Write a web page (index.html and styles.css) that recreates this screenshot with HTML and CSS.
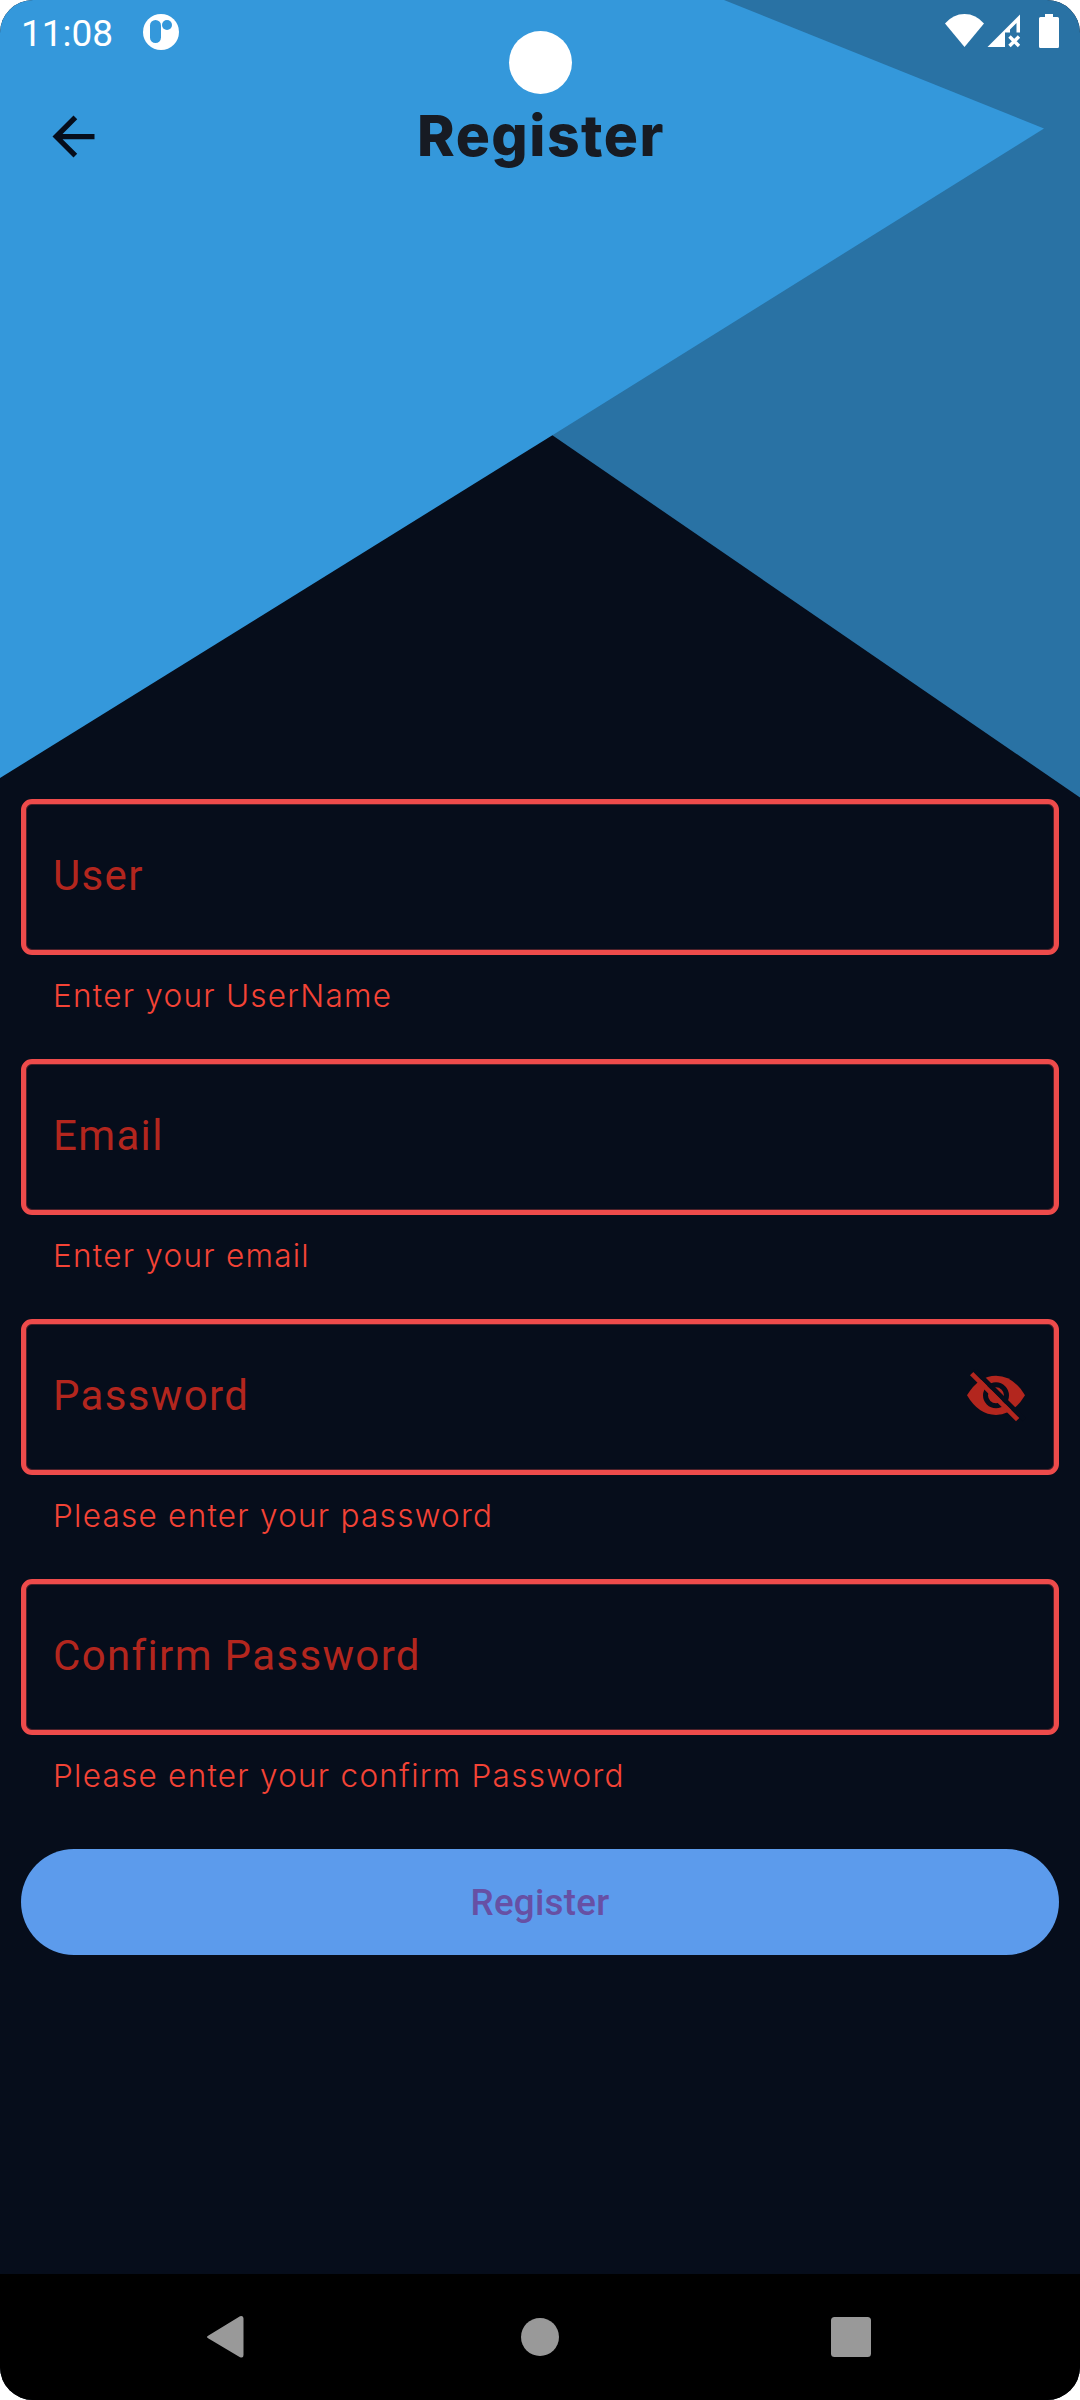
FILE: index.html
```
<!DOCTYPE html>
<html lang="en">
<head>
<meta charset="utf-8">
<title>Register</title>
<link rel="stylesheet" href="styles.css">
</head>
<body>
<div class="screen">
  <svg class="backdrop" viewBox="0 0 1080 800" aria-hidden="true">
    <path class="shade" d="M720 0H1080V797.500L552 435Z"/>
    <path class="light" d="M0 0H724L1044 128.500L552 435.500L0 778Z"/>
  </svg>
  <div class="camera"></div>

  <div class="status">
    <span class="clock">11:08</span>
    <svg class="notice" viewBox="0 0 36 36">
      <circle cx="18" cy="18" r="18" fill="#fff"/>
      <rect x="7" y="6" width="11" height="23" rx="5.500" fill="#3498db"/>
      <circle cx="24" cy="11" r="5" fill="#3498db"/>
    </svg>
    <svg class="signals" viewBox="0 0 115 36" fill="#fff">
      <path d="M0 9.500Q8 0 19.500 0T39 9.500L19.500 33Z"/>
      <path d="M42.500 33L75 0.500V18.500H71.500V9L65 15.500V18.500H60V33Z"/>
      <path d="M64.500 22.500L74 32M74 22.500L64.500 32" stroke="#fff" stroke-width="3.400"/>
      <path d="M100 0h8v3h4.500q1.500 0 1.500 1.500v28q0 1.500-1.500 1.500h-17q-1.500 0-1.500-1.500v-28q0-1.500 1.500-1.500h4.500z"/>
    </svg>
  </div>

  <header class="appbar">
    <svg class="back" viewBox="0 0 24 24"><path d="M20 11H7.830l5.590-5.590L12 4l-8 8 8 8 1.410-1.410L7.830 13H20v-2z"/></svg>
    <h1 class="title">Register</h1>
  </header>

  <form class="form">
    <div class="field">
      <div class="box"><span class="label">User</span></div>
      <div class="error">Enter your UserName</div>
    </div>
    <div class="field">
      <div class="box"><span class="label">Email</span></div>
      <div class="error">Enter your email</div>
    </div>
    <div class="field">
      <div class="box">
        <span class="label">Password</span>
        <svg class="eye" viewBox="192 210 192 171">
          <path d="M201 289Q236 230 288 230T375 289Q340 348 288 348T201 289Z" fill="#b3261e"/>
          <circle cx="288" cy="289" r="31.500" fill="none" stroke="#060d1b" stroke-width="15"/>
          <path d="M222 211L373 362" stroke="#060d1b" stroke-width="14"/>
          <path d="M215 224L353 362" stroke="#b3261e" stroke-width="14"/>
        </svg>
      </div>
      <div class="error">Please enter your password</div>
    </div>
    <div class="field">
      <div class="box"><span class="label">Confirm Password</span></div>
      <div class="error">Please enter your confirm Password</div>
    </div>
    <button class="submit" type="button">Register</button>
  </form>

  <nav class="navbar">
    <svg viewBox="0 0 44 44"><path d="M5.500 20.500L37 1.200Q40.500 0 40.500 3.500V40Q40.500 43.500 37 42.200L5.500 23.500Q2.500 22 5.500 20.500Z"/></svg>
    <svg viewBox="0 0 44 44"><circle cx="24" cy="22" r="19"/></svg>
    <svg viewBox="0 0 44 44"><rect x="2" y="2" width="40" height="40" rx="3.500"/></svg>
  </nav>
</div>
</body>
</html>
```
FILE: styles.css
```
body {
  margin: 0;
  background: #fff;
  font-family: Roboto, sans-serif;
}

.screen {
  position: relative;
  display: flex;
  flex-direction: column;
  width: 1080px;
  height: 2400px;
  overflow: hidden;
  border-radius: 33px;
  background: #060d1b;
  isolation: isolate;
}

.backdrop {
  position: absolute;
  top: 0;
  left: 0;
  z-index: -1;
  width: 1080px;
  height: 800px;
}

.light { fill: #3498db; }
.shade { fill: #2972a4; }

.camera {
  position: absolute;
  top: 31px;
  left: 509px;
  width: 63px;
  height: 63px;
  border-radius: 50%;
  background: #fff;
}

.status {
  display: flex;
  align-items: flex-start;
  box-sizing: border-box;
  height: 63px;
  padding: 14px 20px 0 21px;
  color: #fff;
}

.clock {
  width: 122px;
  margin-top: -2px;
  font-size: 37px;
  line-height: 43px;
}

.notice {
  width: 36px;
  height: 36px;
}

.signals {
  width: 115px;
  height: 36px;
  margin-left: auto;
}

.appbar {
  display: grid;
  grid-template-columns: 63px 1fr 63px;
  align-items: center;
  height: 147px;
  padding: 0 42px;
}

.back {
  width: 63px;
  height: 63px;
  fill: #060d1b;
}

.title {
  margin: 0;
  padding: 0 0 2px 2px;
  color: #171b23;
  font: 800 57px/80px Inter, sans-serif;
  letter-spacing: 1.5px;
  text-align: center;
}

.form {
  display: flex;
  flex-direction: column;
  flex: 1;
  padding: 589px 21px 0;
}

.field { height: 260px; }

.box {
  display: flex;
  align-items: center;
  justify-content: space-between;
  box-sizing: border-box;
  height: 156px;
  padding: 0 26px 3px 27px;
  border: 5px solid #ed4b4b;
  border-radius: 11px;
  box-shadow: inset 0 0 0 1px rgba(237, 75, 75, 0.3);
}

.label {
  color: #b3261e;
  font-size: 42px;
  line-height: 50px;
  letter-spacing: 1.35px;
}

.eye {
  width: 64px;
  height: 57px;
  margin-top: 3px;
}

.error {
  margin: 20px 0 0 32px;
  color: #f44336;
  font-family: Inter, sans-serif;
  font-size: 31.5px;
  font-weight: 300;
  line-height: 42px;
  letter-spacing: 1.25px;
}

.submit {
  height: 106px;
  margin-top: 10px;
  padding-top: 3px;
  border: 0;
  border-radius: 53px;
  background: #5c9bec;
  color: #6750a4;
  font: 500 36.75px/52px Roboto, sans-serif;
  letter-spacing: 0.26px;
}

.navbar {
  display: flex;
  align-items: center;
  justify-content: space-between;
  box-sizing: border-box;
  height: 126px;
  padding: 0 207px 0 203px;
  background: #000;
}

.navbar svg {
  width: 44px;
  height: 44px;
  fill: #999;
}
```
